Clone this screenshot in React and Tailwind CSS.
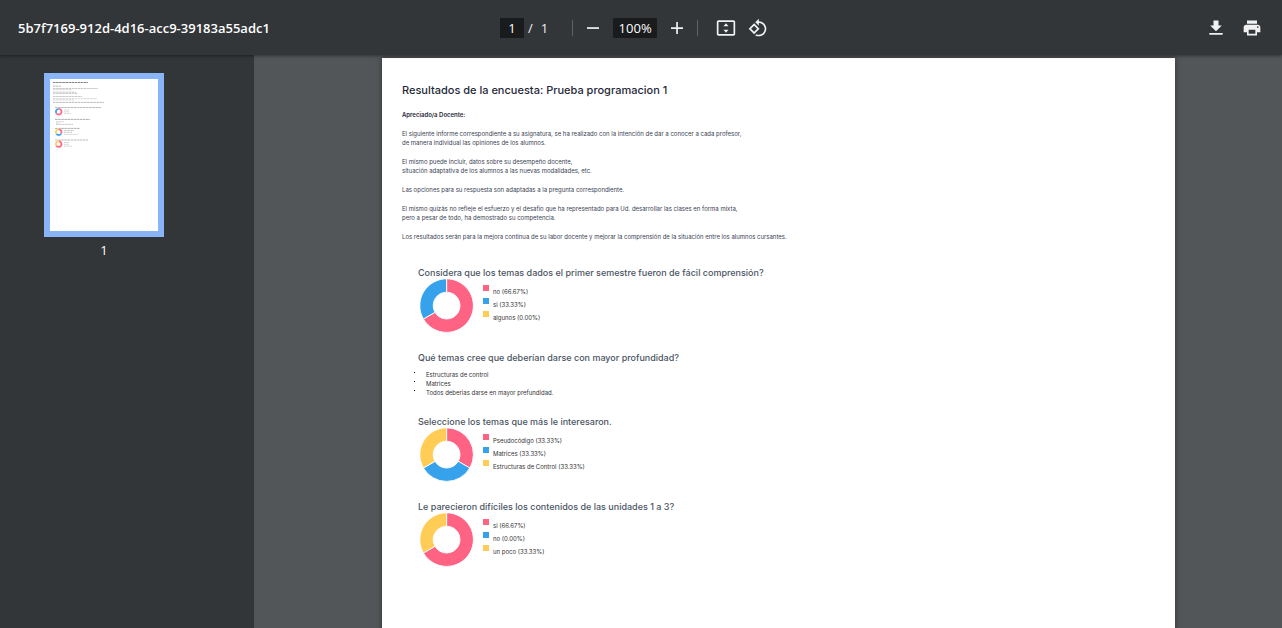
import React from "react";

const PINK = "#ff6384";
const BLUE = "#36a2eb";
const YELLOW = "#ffcd56";

const intro = [
  ["El siguiente informe correspondiente a su asignatura, se ha realizado con la intención de dar a conocer a cada profesor,", "de manera individual las opiniones de los alumnos."],
  ["El mismo puede incluir, datos sobre su desempeño docente,", "situación adaptativa de los alumnos a las nuevas modalidades, etc."],
  ["Las opciones para su respuesta son adaptadas a la pregunta correspondiente."],
  ["El mismo quizás no refleje el esfuerzo y el desafío que ha representado para Ud. desarrollar las clases en forma mixta,", "pero a pesar de todo, ha demostrado su competencia."],
  ["Los resultados serán para la mejora continua de su labor docente y mejorar la comprensión de la situación entre los alumnos cursantes."],
];

const questions = [
  {
    title: "Considera que los temas dados el primer semestre fueron de fácil comprensión?",
    options: [
      { label: "no", pct: "66.67", parts: 2, color: PINK },
      { label: "si", pct: "33.33", parts: 1, color: BLUE },
      { label: "algunos", pct: "0.00", parts: 0, color: YELLOW },
    ],
  },
  {
    title: "Qué temas cree que deberían darse con mayor profundidad?",
    answers: ["Estructuras de control", "Matrices", "Todos deberias darse en mayor prefundidad."],
  },
  {
    title: "Seleccione los temas que más le interesaron.",
    options: [
      { label: "Pseudocódigo", pct: "33.33", parts: 1, color: PINK },
      { label: "Matrices", pct: "33.33", parts: 1, color: BLUE },
      { label: "Estructuras de Control", pct: "33.33", parts: 1, color: YELLOW },
    ],
  },
  {
    title: "Le parecieron difíciles los contenidos de las unidades 1 a 3?",
    options: [
      { label: "si", pct: "66.67", parts: 2, color: PINK },
      { label: "no", pct: "0.00", parts: 0, color: BLUE },
      { label: "un poco", pct: "33.33", parts: 1, color: YELLOW },
    ],
  },
];

function slicePath(start, end) {
  const at = (turn, r) => {
    const a = turn * 2 * Math.PI - Math.PI / 2;
    return `${26.6 + r * Math.cos(a)} ${26.6 + r * Math.sin(a)}`;
  };
  const large = end - start > 0.5 ? 1 : 0;
  return `M${at(start, 26.8)} A26.8 26.8 0 ${large} 1 ${at(end, 26.8)} L${at(end, 13.4)} A13.4 13.4 0 ${large} 0 ${at(start, 13.4)} Z`;
}

function Slices({ options }) {
  let turn = 0;
  return options.filter((o) => o.parts).map((o) => {
    const start = turn;
    turn += o.parts / 3;
    return <path key={o.label} d={slicePath(start, turn)} fill={o.color} stroke="#fff" strokeWidth="0.9" />;
  });
}

function Question({ q }) {
  return (
    <section>
      <h2 className="text-[9px] leading-3 font-medium text-[#4a5563]">{q.title}</h2>
      {q.options ? (
        <div className="flex gap-[9px] pl-[2px]">
          <svg viewBox="0 0 54 54" className="size-[54px]" aria-hidden="true">
            <Slices options={q.options} />
          </svg>
          <ul className="flex flex-col gap-[2px] pt-[6px]">
            {q.options.map((o) => (
              <li key={o.label} className="flex gap-1 text-[6px] leading-[9px] text-[#333]">
                <span className="size-[6px]" style={{ backgroundColor: o.color }} />
                <span className="pt-[2px]">{o.label} ({o.pct}%)</span>
              </li>
            ))}
          </ul>
        </div>
      ) : (
        <ul className="-ml-1 pt-[6px] text-[6px] leading-[9px] text-[#333]">
          {q.answers.map((a) => (
            <li key={a} className="flex gap-[11px]">
              <span className="mt-[2px] size-px bg-black" />
              {a}
            </li>
          ))}
        </ul>
      )}
    </section>
  );
}

function Report() {
  return (
    <article className="aspect-[793/1122] w-[793px] shrink-0 self-start bg-white px-5 pt-[22px] font-['Inter',sans-serif] shadow-[0_0_5px_#333]">
      <h1 className="text-[11px] leading-5 font-medium text-[#1f2937]">Resultados de la encuesta: Prueba programacion 1</h1>
      <p className="pt-[10px] text-[6px] leading-[9px] font-semibold text-[#1f2937]">Apreciado/a Docente:</p>
      <div className="flex flex-col gap-[10px] pt-[10px] text-[6px] leading-[9px] text-[#374151]">
        {intro.map((lines) => (
          <p key={lines[0]}>
            {lines.map((l) => <span key={l} className="block">{l}</span>)}
          </p>
        ))}
      </div>
      <div className="flex flex-col gap-[19px] px-4 pt-[26px]">
        {questions.map((q) => <Question key={q.title} q={q} />)}
      </div>
    </article>
  );
}

const thumbLines = [
  [3, 3.5, 35, "#666"], [3, 7.2, 8, "#aaa"], [3, 9.5, 45, "#bbb"], [3, 10.7, 19, "#ccc"], [3, 13.2, 23, "#bbb"], [3, 14.4, 25, "#bbb"],
  [3, 17.5, 29, "#bbb"], [3, 19.7, 44, "#ccc"], [3, 20.9, 21, "#ccc"], [3, 23.4, 51, "#aaa"],
  [5, 28.5, 46, "#aaa"], [14, 31, 5, "#ccc"], [14, 32.8, 5, "#ccc"], [14, 34.6, 7, "#ccc"],
  [5, 40.4, 35, "#999"], [6, 42.6, 8, "#ccc"], [6, 44, 4, "#ccc"], [6, 45.4, 17, "#bbb"],
  [5, 49.4, 25, "#999"], [14, 51.5, 10, "#bbb"], [14, 53.3, 8, "#bbb"], [14, 55.4, 14, "#ccc"],
  [5, 61, 33, "#aaa"], [14, 63.5, 5, "#ccc"], [14, 65.3, 5, "#ccc"], [14, 67.2, 8, "#ccc"],
];

function Thumbnail() {
  const charts = [[questions[0], 29], [questions[2], 49.5], [questions[3], 61.3]];
  return (
    <svg viewBox="0 0 108 152" className="h-[152px] w-[108px] bg-white" aria-hidden="true">
      {thumbLines.map(([x, y, w, c]) => (
        <line key={`${x}-${y}`} x1={x} x2={x + w} y1={y} y2={y} stroke={c} strokeWidth="0.8" strokeDasharray="2.6 0.5" />
      ))}
      {charts.map(([q, y]) => (
        <g key={q.title} transform={`translate(5 ${y}) scale(0.14)`}>
          <Slices options={q.options} />
        </g>
      ))}
    </svg>
  );
}

const iconButton = "flex size-8 items-center justify-center";

function Toolbar() {
  return (
    <header className="relative z-10 flex h-[55px] shrink-0 items-center bg-[#323639] pr-[14px] pl-[18px] text-[#f1f1f1] shadow-[0_1px_3px_rgba(0,0,0,0.4)]">
      <h1 className="flex-1 text-[13px] leading-5 font-semibold text-white">5b7f7169-912d-4d16-acc9-39183a55adc1</h1>
      <div className="mr-3 flex items-center text-[13px] leading-5">
        <input aria-label="Página" defaultValue="1" className="h-5 w-6 bg-[#191b1c] text-center text-white" />
        <span className="pl-1">/</span>
        <span className="pl-2">1</span>
        <span className="ml-6 h-4 w-px bg-[#5f6366]" />
        <button aria-label="Alejar" className={`${iconButton} mx-1`}>
          <svg viewBox="0 0 20 20" className="size-5" fill="currentColor"><path d="M4 9.2h12v1.7H4z" /></svg>
        </button>
        <input aria-label="Zoom" defaultValue="100%" className="h-5 w-11 bg-[#191b1c] text-center text-white" />
        <button aria-label="Acercar" className={`${iconButton} ml-1`}>
          <svg viewBox="0 0 20 20" className="size-5" fill="currentColor"><path d="M9.2 4h1.7v5.2H16v1.7h-5.1V16H9.2v-5.1H4V9.2h5.2z" /></svg>
        </button>
        <span className="ml-1 h-4 w-px bg-[#5f6366]" />
        <button aria-label="Ajustar a la página" className={`${iconButton} ml-3`}>
          <svg viewBox="0 0 20 20" className="size-5" fill="currentColor">
            <path fillRule="evenodd" d="M2.5 2.2h15q1.7 0 1.7 1.7v12.2q0 1.7-1.7 1.7h-15q-1.700 0-1.700-1.700V3.900q0-1.700 1.700-1.700zm0 1.700v12.200h15V3.900z" />
            <path d="M10 5.200l2.500 3h-5zM10 14.800l2.500-3h-5z" />
          </svg>
        </button>
        <button aria-label="Girar" className={iconButton}>
          <svg viewBox="0 0 24 24" className="size-5" fill="currentColor">
            <path d="M7.340 6.410L.860 12.900l6.490 6.480 6.490-6.480-6.500-6.490zM3.690 12.900l3.660-3.660L11 12.900l-3.660 3.660-3.650-3.660zm15.670-6.260C17.610 4.880 15.300 4 13 4V.760L8.760 5 13 9.240V6c1.790 0 3.580.680 4.950 2.050 2.730 2.730 2.730 7.170 0 9.900C16.580 19.320 14.790 20 13 20c-.970 0-1.940-.210-2.840-.610l-1.490 1.490C10.020 21.620 11.510 22 13 22c2.300 0 4.610-.880 6.360-2.640 3.520-3.510 3.520-9.210 0-12.720z" />
          </svg>
        </button>
      </div>
      <div className="flex flex-1 items-center justify-end gap-1">
        <button aria-label="Descargar" className={iconButton}>
          <svg viewBox="0 0 24 24" className="size-5" fill="currentColor"><path d="M19 9h-4V3H9v6H5l7 7 7-7zM4 18v2h16v-2H4z" /></svg>
        </button>
        <button aria-label="Imprimir" className={iconButton}>
          <svg viewBox="0 0 24 24" className="size-5" fill="currentColor"><path d="M19 8H5c-1.660 0-3 1.340-3 3v6h4v4h12v-4h4v-6c0-1.660-1.340-3-3-3zm-3 11H8v-5h8v5zm3-7c-.550 0-1-.450-1-1s.450-1 1-1 1 .450 1 1-.450 1-1 1zm-1-9H6v4h12V3z" /></svg>
        </button>
      </div>
    </header>
  );
}

export default function App() {
  return (
    <div className="flex h-screen flex-col overflow-hidden bg-[#525659] font-['Open_Sans',sans-serif]">
      <Toolbar />
      <div className="flex min-h-0 flex-1">
        <aside className="w-[254px] shrink-0 bg-[#323639] pt-[18px] pl-11">
          <button className="flex w-[120px] flex-col items-center gap-[3px] text-[13px] leading-5 text-white">
            <span className="border-[6px] border-[#8ab4f8]"><Thumbnail /></span>
            <span>1</span>
          </button>
        </aside>
        <main className="flex min-w-0 flex-1 justify-center overflow-hidden pt-[3px] pl-[21px]">
          <Report />
        </main>
      </div>
    </div>
  );
}
